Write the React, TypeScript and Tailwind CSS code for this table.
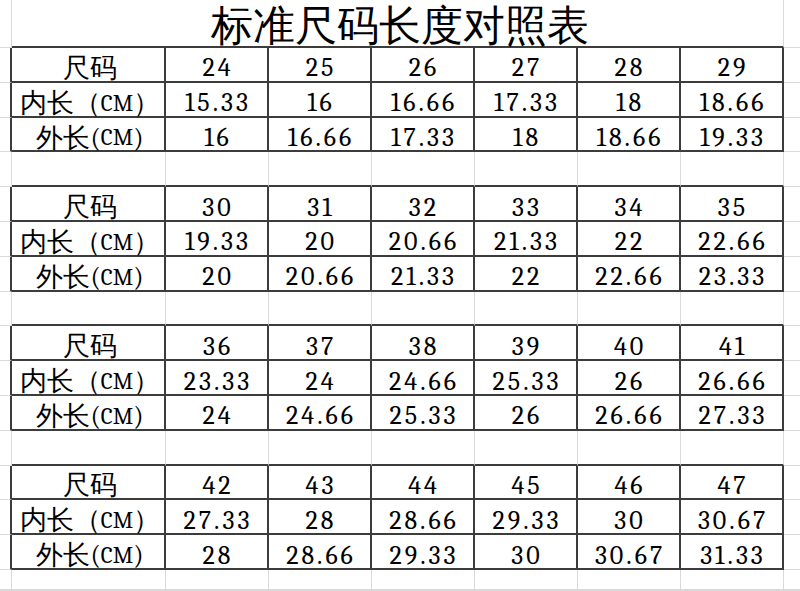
import React from 'react';
import clsx from 'clsx';

const blocks = [
  {
    sizes: ['24', '25', '26', '27', '28', '29'],
    inner: ['15.33', '16', '16.66', '17.33', '18', '18.66'],
    outer: ['16', '16.66', '17.33', '18', '18.66', '19.33'],
  },
  {
    sizes: ['30', '31', '32', '33', '34', '35'],
    inner: ['19.33', '20', '20.66', '21.33', '22', '22.66'],
    outer: ['20', '20.66', '21.33', '22', '22.66', '23.33'],
  },
  {
    sizes: ['36', '37', '38', '39', '40', '41'],
    inner: ['23.33', '24', '24.66', '25.33', '26', '26.66'],
    outer: ['24', '24.66', '25.33', '26', '26.66', '27.33'],
  },
  {
    sizes: ['42', '43', '44', '45', '46', '47'],
    inner: ['27.33', '28', '28.66', '29.33', '30', '30.67'],
    outer: ['28', '28.66', '29.33', '30', '30.67', '31.33'],
  },
];

const DARK_R = 'border-r-2 border-r-[#3c3c3c]';
const LIGHT_R = 'border-r border-r-[#d9d9d9]';
const DARK_B = 'border-b-2 border-b-[#3c3c3c]';
const LIGHT_B = 'border-b border-b-[#d9d9d9]';

const labels: React.ReactNode[] = [
  <>尺码</>,
  <>
    内长（<span className="text-[23px]">CM</span>）
  </>,
  <>
    外长(<span className="text-[23px]">CM</span>)
  </>,
];

type Row =
  | { kind: 'data'; label: React.ReactNode; values: string[] }
  | { kind: 'blank' }
  | { kind: 'tail' };

const rows: Row[] = [];
blocks.forEach((b, i) => {
  rows.push({ kind: 'data', label: labels[0], values: b.sizes });
  rows.push({ kind: 'data', label: labels[1], values: b.inner });
  rows.push({ kind: 'data', label: labels[2], values: b.outer });
  if (i < blocks.length - 1) rows.push({ kind: 'blank' });
});
rows.push({ kind: 'tail' });
rows.push({ kind: 'tail' });

export default function App() {
  return (
    <div className="w-[800px] h-[591px] overflow-hidden bg-white text-black font-serif [font-family:'Liberation_Serif','Noto_Sans_CJK_SC',serif]">
      <div className="grid h-full grid-cols-[12px_154px_repeat(6,103px)_1fr] grid-rows-[48px_repeat(15,34.8px)_20px_1fr]">
        {/* title row */}
        <div className={clsx(LIGHT_R, LIGHT_B)} />
        <div
          className={clsx(
            'col-span-7 flex items-center justify-center pt-[7px] pl-[4px] text-[42px] leading-none',
            LIGHT_R,
            DARK_B,
          )}
        >
          标准尺码长度对照表
        </div>
        <div className={LIGHT_B} />

        {rows.map((row, r) => {
          if (row.kind === 'data') {
            return (
              <React.Fragment key={r}>
                <div className={clsx(DARK_R, LIGHT_B)} />
                <div
                  className={clsx(
                    'flex items-center justify-center pt-[8px] pl-[4px] text-[27px] leading-none whitespace-nowrap',
                    DARK_R,
                    DARK_B,
                  )}
                >
                  {row.label}
                </div>
                {row.values.map((v, c) => (
                  <div
                    key={c}
                    className={clsx(
                      'flex items-center justify-center pt-[8px] pl-[3px] text-[26px] leading-none tracking-[3px]',
                      DARK_R,
                      DARK_B,
                    )}
                  >
                    {v}
                  </div>
                ))}
                <div className={LIGHT_B} />
              </React.Fragment>
            );
          }
          const bottom = row.kind === 'blank' ? DARK_B : LIGHT_B;
          return (
            <React.Fragment key={r}>
              <div className={clsx(LIGHT_R, LIGHT_B)} />
              {[0, 1, 2, 3, 4, 5, 6].map((c) => (
                <div key={c} className={clsx(LIGHT_R, bottom)} />
              ))}
              <div className={LIGHT_B} />
            </React.Fragment>
          );
        })}
      </div>
    </div>
  );
}
